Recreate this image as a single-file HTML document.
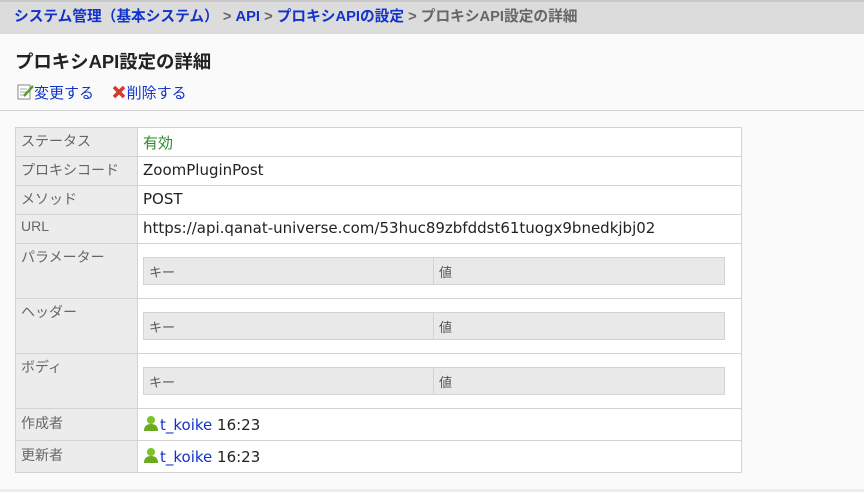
<!DOCTYPE html>
<html><head><meta charset="utf-8"><style>
body{margin:0;width:864px;height:492px;overflow:hidden;background:#fafafa;font-family:"Liberation Sans","Noto Sans CJK JP",sans-serif;position:relative}
.bc{position:absolute;left:0;top:0;width:864px;height:34px;background:#dcdcdc;border-top:2px solid #c8c8c8;box-sizing:border-box;font-size:14.7px;font-weight:bold;line-height:31px;padding-left:14px;color:#666}
.bc a{color:#1133cc;text-decoration:none}
h1{position:absolute;left:15px;top:48px;margin:0;font-size:18.4px;font-weight:bold;color:#222}
.ops{position:absolute;left:16px;top:82px;font-size:15px;color:#1133cc}
.hr{position:absolute;left:0;top:110px;width:864px;height:1px;background:#d0d0d0}
table.m{position:absolute;left:15px;top:127px;width:727px;border-collapse:collapse;font-size:15px}
table.m td{border:1px solid #d3d3d3;background:#fff;color:#222;vertical-align:top;padding:4px 5px 0 5px;box-sizing:border-box;font-family:"DejaVu Sans","Noto Sans CJK JP",sans-serif}
table.m td.l{background:#ececec;color:#666;width:122px;font-size:14px;padding-top:3px;font-family:"Liberation Sans","Noto Sans CJK JP",sans-serif}
table.i{border-collapse:collapse;width:582px;margin:9px 0 0 0}
table.i td{background:#e9e9e9!important;height:27px;padding:0 5px!important;vertical-align:middle!important;color:#555!important;font-size:13px;border:1px solid #d3d3d3}
.u{display:inline-block;vertical-align:-2px;margin-right:1px}
a.n{color:#1133cc;text-decoration:none}
.bot{position:absolute;left:0;top:489px;width:864px;height:3px;background:#ececec}
</style></head><body>
<div class="bc"><a>システム管理（基本システム）</a> &gt; <a>API</a> &gt; <a>プロキシAPIの設定</a> &gt; プロキシAPI設定の詳細</div>
<h1>プロキシAPI設定の詳細</h1>
<div class="ops"><svg width="18" height="17" style="vertical-align:-2px"><rect x="2" y="2" width="12" height="14" fill="#fff" stroke="#888"/><path d="M4 6h7M4 9h7M4 12h5" stroke="#aaa"/><path d="M8 13l9-10" stroke="#5a9e2a" stroke-width="2.5"/></svg>変更する&nbsp;&nbsp;&nbsp;&nbsp;<svg width="16" height="15" style="vertical-align:-1px"><path d="M3 3l10 10M13 3l-10 10" stroke="#d8382a" stroke-width="3.5"/></svg>削除する</div>
<div class="hr"></div>
<table class="m">
<tr style="height:29px"><td class="l">ステータス</td><td style="color:#2a8a2a">有効</td></tr>
<tr style="height:29px"><td class="l">プロキシコード</td><td>ZoomPluginPost</td></tr>
<tr style="height:29px"><td class="l">メソッド</td><td>POST</td></tr>
<tr style="height:29px"><td class="l">URL</td><td>https://api.qanat-universe.com/53huc89zbfddst61tuogx9bnedkjbj02</td></tr>
<tr style="height:55px"><td class="l">パラメーター</td><td><table class="i"><tr><td style="width:290px">キー</td><td>値</td></tr></table></td></tr>
<tr style="height:55px"><td class="l">ヘッダー</td><td><table class="i"><tr><td style="width:290px">キー</td><td>値</td></tr></table></td></tr>
<tr style="height:55px"><td class="l">ボディ</td><td><table class="i"><tr><td style="width:290px">キー</td><td>値</td></tr></table></td></tr>
<tr style="height:32px"><td class="l" style="padding-top:4px">作成者</td><td style="padding-top:6px"><svg class="u" width="16" height="17"><circle cx="8" cy="5" r="4" fill="#7cc22a"/><path d="M1 16q0-7 7-7t7 7z" fill="#6aaa1e"/></svg><a class="n">t_koike</a> 16:23</td></tr>
<tr style="height:32px"><td class="l" style="padding-top:4px">更新者</td><td style="padding-top:6px"><svg class="u" width="16" height="17"><circle cx="8" cy="5" r="4" fill="#7cc22a"/><path d="M1 16q0-7 7-7t7 7z" fill="#6aaa1e"/></svg><a class="n">t_koike</a> 16:23</td></tr>
</table>
<div class="bot"></div>
</body></html>
